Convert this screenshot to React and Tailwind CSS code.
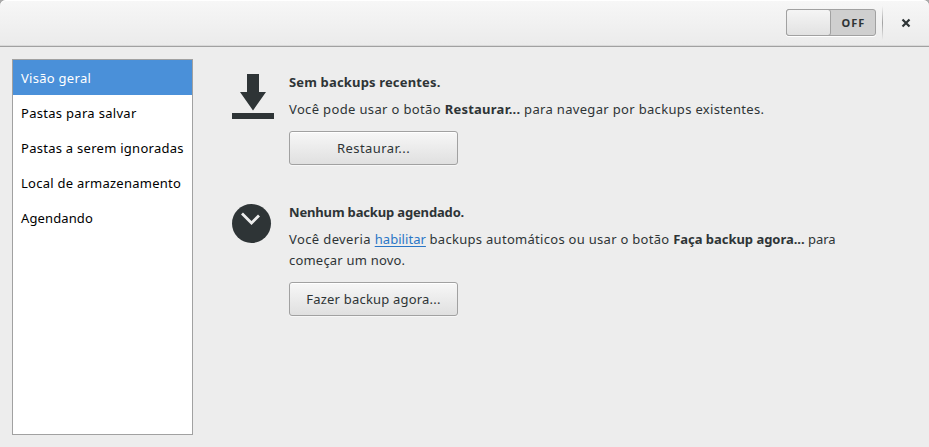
const items = [
  { label: 'Visão geral', style: 'bg-[#4a90d9] text-white tracking-[0.28px]' },
  { label: 'Pastas para salvar', style: 'text-black tracking-[0.3px]' },
  { label: 'Pastas a serem ignoradas', style: 'text-black tracking-[0.27px]' },
  { label: 'Local de armazenamento', style: 'text-black tracking-[0.25px]' },
  { label: 'Agendando', style: 'text-black tracking-[0.12px]' },
];

function Button({ children, className }) {
  return (
    <button className={`flex h-[34px] w-[169px] items-center justify-center rounded-[3px] border border-[#a1a1a1] bg-linear-to-b from-[#f7f7f7] to-[#e0e0e0] pt-px shadow-[0_1px_0_#f7f7f7,inset_0_1px_0_#ffffff] ${className}`}>
      {children}
    </button>
  );
}

function DownloadIcon() {
  return (
    <svg width="42" height="46" viewBox="0 0 42 46" fill="#2e3436" className="block">
      <path d="M15 1h12v18h7L21 37.500 8 19h7z" />
      <path d="M0 40h42v6H0z" />
    </svg>
  );
}

function ClockIcon() {
  return (
    <svg width="42" height="46" viewBox="0 0 42 46" className="block">
      <circle cx="19.500" cy="20.500" r="19.500" fill="#2e3436" />
      <path d="M10 10.500l9.500 9.500 7.500-7.500" fill="none" stroke="#ededed" strokeWidth="2.800" />
    </svg>
  );
}

export default function App() {
  return (
    <div className="flex h-[447px] w-[929px] flex-col overflow-hidden bg-[#a9a9a9] font-['Noto_Sans','Open_Sans',sans-serif] text-[13px] text-[#2e3436]">
      <header className="flex h-[47px] shrink-0 items-start justify-end rounded-t-[6px] border-b border-[#a1a1a1] bg-linear-to-b from-[#f7f7f7] to-[#ebebeb] shadow-[inset_0_1px_0_#ffffff,inset_0_-1px_0_#d9d9d9]">
        <div className="mt-[9px] flex h-[27px] w-[90px] rounded-[3px] border border-[#a1a1a1] bg-[#cfcfcf] shadow-[0_1px_0_#ffffff]">
          <div className="-my-px -ml-px w-[45px] rounded-[3px] border border-[#a1a1a1] bg-linear-to-b from-[#f5f5f5] to-[#e2e2e2]" />
          <div className="flex flex-1 items-center justify-center pt-0.5 pl-px text-[11px] font-bold tracking-[1px]">OFF</div>
        </div>
        <div className="mt-1.5 ml-1.5 h-[34px] w-px bg-linear-to-b from-transparent via-[#a1a1a1] to-transparent" />
        <svg width="10" height="10" viewBox="0 0 10 10" className="mt-[18px] mr-[18px] ml-[18px]">
          <path d="M1.500 1.500l7 7M8.500 1.500l-7 7" stroke="#2e3436" strokeWidth="2.200" />
        </svg>
      </header>
      <div className="flex flex-1 bg-[#ededed] pt-3 pb-3 pl-3">
        <nav className="w-[181px] shrink-0 border border-[#a1a1a1] bg-white">
          {items.map((item) => (
            <div key={item.label} className={`flex h-[35px] items-center whitespace-nowrap pt-0.5 pl-2 ${item.style}`}>
              {item.label}
            </div>
          ))}
        </nav>
        <main className="ml-[39px] flex flex-col pt-[14px]">
          <section className="flex h-[130px]">
            <DownloadIcon />
            <div className="ml-[15px] whitespace-nowrap">
              <h2 className="h-[27px] leading-[19px] font-bold tracking-[0.16px]">Sem backups recentes.</h2>
              <p className="h-[31px] leading-[19px]">
                <span className="tracking-[0.35px]">Você pode usar o botão </span>
                <b className="tracking-[0.25px]">Restaurar...</b>
                <span className="tracking-[0.33px]"> para navegar por backups existentes.</span>
              </p>
              <Button className="tracking-[0.45px]">Restaurar...</Button>
            </div>
          </section>
          <section className="flex">
            <ClockIcon />
            <div className="ml-[15px] whitespace-nowrap">
              <h2 className="h-[26px] leading-[19px] font-bold tracking-[-0.16px]">Nenhum backup agendado.</h2>
              <p className="h-[53px] leading-[21px]">
                <span className="tracking-[0.38px]">Você deveria </span>
                <a className="tracking-[0.05px] text-[#2a76c6] underline decoration-1 underline-offset-2 [text-decoration-skip-ink:none]">habilitar</a>
                <span className="tracking-[0.29px]"> backups automáticos ou usar o botão </span>
                <b className="tracking-[-0.03px]">Faça backup agora...</b>
                <span> para</span>
                <br />
                <span className="tracking-[0.2px]">começar um novo.</span>
              </p>
              <Button className="tracking-[0.2px]">Fazer backup agora...</Button>
            </div>
          </section>
        </main>
      </div>
    </div>
  );
}
